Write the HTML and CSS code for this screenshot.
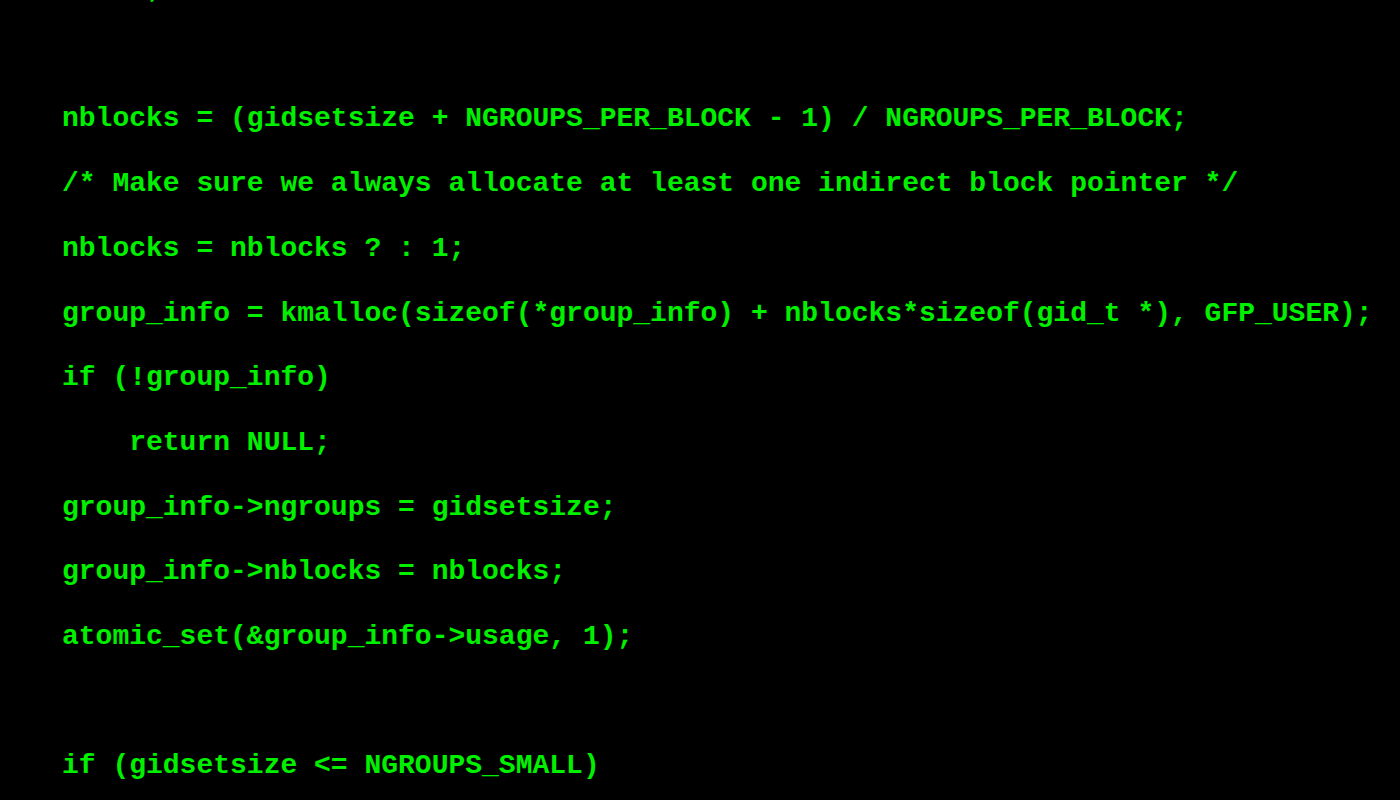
FILE: index.html
```html
<!DOCTYPE html>
<html>
<head>
<meta charset="utf-8">
<link rel="stylesheet" href="styles.css">
</head>
<body>
<pre class="code"><span class="line">int i;</span>
<span class="line"></span>
<span class="line">nblocks = (gidsetsize + NGROUPS_PER_BLOCK - 1) / NGROUPS_PER_BLOCK;</span>
<span class="line">/* Make sure we always allocate at least one indirect block pointer */</span>
<span class="line">nblocks = nblocks ? : 1;</span>
<span class="line">group_info = kmalloc(sizeof(*group_info) + nblocks*sizeof(gid_t *), GFP_USER);</span>
<span class="line">if (!group_info)</span>
<span class="line">    return NULL;</span>
<span class="line">group_info-&gt;ngroups = gidsetsize;</span>
<span class="line">group_info-&gt;nblocks = nblocks;</span>
<span class="line">atomic_set(&amp;group_info-&gt;usage, 1);</span>
<span class="line"></span>
<span class="line">if (gidsetsize &lt;= NGROUPS_SMALL)</span></pre>
</body>
</html>
```
FILE: styles.css
```css
html, body {
  margin: 0;
  padding: 0;
  background: #000;
  height: 100%;
  overflow: hidden;
}
.code {
  margin: -42px 0 0 0;
  padding: 0 0 0 62px;
  font-family: "Liberation Mono", "Courier New", monospace;
  font-weight: bold;
  font-size: 28px;
  line-height: 64.7px;
  color: #00f000;
  white-space: pre;
}
.line {
  display: inline;
}
```
